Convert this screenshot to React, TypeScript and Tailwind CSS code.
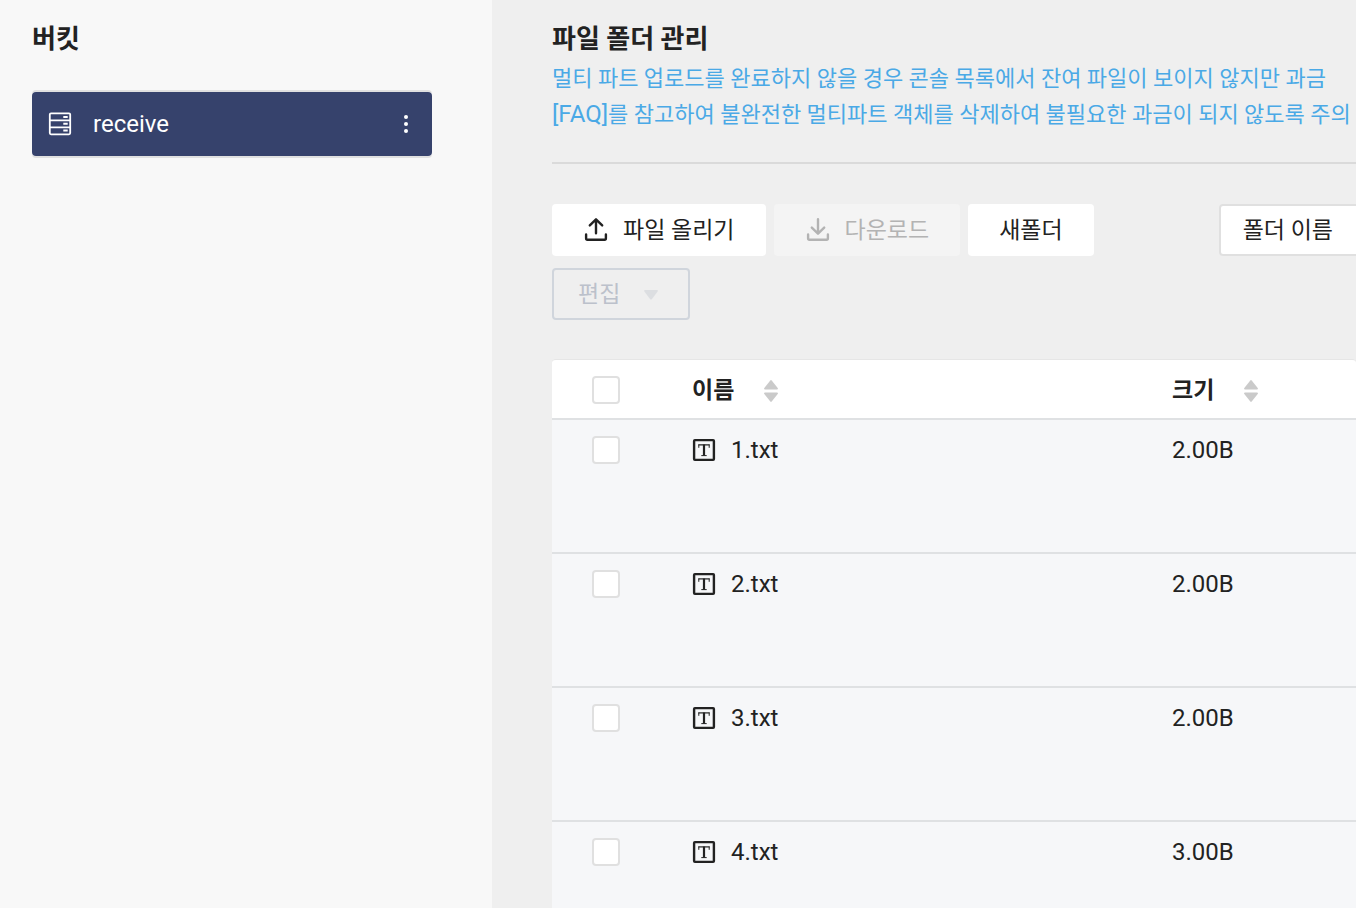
import React from "react";

const files = [
  { name: "1.txt", size: "2.00B" },
  { name: "2.txt", size: "2.00B" },
  { name: "3.txt", size: "2.00B" },
  { name: "4.txt", size: "3.00B" },
];

function BucketIcon() {
  return (
    <svg width="24" height="24" viewBox="0 0 24 24" fill="none" stroke="currentColor" strokeWidth="1.8" aria-hidden="true">
      <rect x="1.8" y="1.3" width="20.4" height="21" rx="1.2" />
      <path d="M1.8 8.3H22.2M1.8 15.3H22.2" />
      <path d="M15.3 5H19.7M15.3 11.8H19.7M15.3 18.6H19.7" strokeWidth="2" />
    </svg>
  );
}

function TransferIcon({ up }: { up?: boolean }) {
  return (
    <svg
      width="24"
      height="24"
      viewBox="0 1 24 24"
      fill="none"
      stroke="currentColor"
      strokeWidth="2.4"
      strokeLinecap="round"
      strokeLinejoin="round"
      overflow="visible"
      aria-hidden="true"
    >
      <path d="M2.1 16.4V20.3Q2.1 21.7 3.4 21.7H20.6Q21.9 21.7 21.9 20.3V16.4" />
      {up ? <path d="M12 15.2V1.4M5.8 7.4L12 1.3L18.2 7.4" /> : <path d="M12 1.2V15.4M5.8 9.6L12 15.7L18.2 9.6" />}
    </svg>
  );
}

function TextFileIcon() {
  return (
    <svg width="24" height="24" viewBox="0 0 24 24" fill="none" stroke="currentColor" aria-hidden="true">
      <rect x="2.1" y="2.1" width="19.8" height="19.8" rx="0.8" strokeWidth="2.4" />
      <path d="M6.4 6.9H17.6" strokeWidth="1.2" />
      <path d="M6.8 6.5V9.8M17.2 6.5V9.8" strokeWidth="1" />
      <path d="M12 6.5V17.5" strokeWidth="2.2" />
      <path d="M9.3 17.6H14.7" strokeWidth="1" />
    </svg>
  );
}

function SortIcon() {
  return (
    <svg width="14" height="22" viewBox="0 0 14 22" fill="#cacaca" aria-hidden="true">
      <path d="M6.3 0.4Q7 -0.3 7.7 0.4L13.7 7.9Q14.4 9.6 13 9.6H1Q-0.4 9.6 0.3 7.9Z" />
      <path d="M6.3 21.6Q7 22.3 7.7 21.6L13.7 14.1Q14.4 12.4 13 12.4H1Q-0.4 12.4 0.3 14.1Z" />
    </svg>
  );
}

function Checkbox({ label }: { label: string }) {
  return (
    <input
      type="checkbox"
      aria-label={label}
      className="block size-7 appearance-none rounded border-2 border-[#e0e0e0] bg-white checked:bg-[#36426c]"
    />
  );
}

export default function App() {
  return (
    <div className="flex h-screen overflow-hidden bg-[#efefef] font-['Roboto','Noto_Sans_CJK_KR',sans-serif] text-2xl text-[#222]" lang="ko">
      <aside className="w-[492px] shrink-0 bg-[#f8f8f8] pt-[21px] pr-15 pl-8">
        <h2 className="text-[26px] leading-9 font-bold">버킷</h2>
        <ul className="mt-[33px]">
          <li className="rounded border-y-2 border-[#e0e0e0]">
            <div className="flex h-16 items-center rounded bg-[#36426c] pr-3.5 pl-4 text-white">
              <a href="#receive" className="flex flex-1 items-center gap-[21px]">
                <BucketIcon />
                receive
              </a>
              <button type="button" aria-label="메뉴" className="flex size-6 items-center justify-center">
                <svg width="4" height="18" viewBox="0 0 4 18" fill="currentColor" aria-hidden="true">
                  <circle cx="2" cy="2" r="2" />
                  <circle cx="2" cy="9" r="2" />
                  <circle cx="2" cy="16" r="2" />
                </svg>
              </button>
            </div>
          </li>
        </ul>
      </aside>

      <main className="min-w-0 flex-1 overflow-hidden pt-[21px] pl-15">
        <h1 className="text-[26px] leading-9 font-bold">파일 폴더 관리</h1>
        <p className="mt-1 border-b-2 border-[#dadada] pb-[29px] text-[22px] leading-9 whitespace-nowrap text-[#4aa9e6]">
          멀티 파트 업로드를 완료하지 않을 경우 콘솔 목록에서 잔여 파일이 보이지 않지만 과금
          <br />
          <a href="#faq" className="text-2xl leading-none">[FAQ]</a>를 참고하여 불완전한 멀티파트 객체를 삭제하여
          불필요한 과금이 되지 않도록 주의
        </p>

        <div className="mt-10 flex items-center gap-2 text-[23px]">
          <button type="button" className="flex h-13 shrink-0 items-center gap-[15px] rounded bg-white pt-0.5 pr-[31px] pl-8">
            <TransferIcon up />
            파일 올리기
          </button>
          <button
            type="button"
            disabled
            className="flex h-13 shrink-0 items-center gap-[15px] rounded bg-[#f4f4f4] pt-0.5 pr-[31px] pl-8 text-[#b3b3b3]"
          >
            <TransferIcon />
            다운로드
          </button>
          <button type="button" className="h-13 shrink-0 rounded bg-white px-[31px] pt-0.5">
            새폴더
          </button>
          <select
            aria-label="검색 조건"
            className="ml-[117px] h-13 w-60 shrink-0 appearance-none rounded border-2 border-[#e0e0e0] bg-white px-[22px] pt-0.5"
          >
            <option>폴더 이름</option>
          </select>
        </div>
        <button
          type="button"
          disabled
          className="mt-3 flex h-13 w-[138px] items-center justify-between rounded border-2 border-[#d0d5dc] pt-0.5 pr-[30px] pl-6 text-[23px] text-[#bcc1cb]"
        >
          편집
          <svg width="14" height="10" viewBox="0 0 14 10" fill="#dcdee1" aria-hidden="true">
            <path d="M1 0H13Q14.4 0 13.6 1.4L7.8 9.2Q7 10 6.2 9.2L0.4 1.4Q-0.4 0 1 0Z" />
          </svg>
        </button>

        <div className="mt-[39px] overflow-hidden rounded-t border-t border-[#e6e6e6]">
          <table className="w-full table-fixed border-separate border-spacing-0 text-left">
            <colgroup>
              <col className="w-[140px]" />
              <col className="w-[480px]" />
              <col />
            </colgroup>
            <thead className="bg-white text-[23px]">
              <tr className="h-15 *:border-b-2 *:border-[#dfe1e3]">
                <th className="pt-0.5 pl-10">
                  <Checkbox label="전체 선택" />
                </th>
                <th className="pt-1">
                  <button type="button" className="flex items-center gap-[30px] font-bold">
                    이름
                    <SortIcon />
                  </button>
                </th>
                <th className="pt-1">
                  <button type="button" className="flex items-center gap-[30px] font-bold">
                    크기
                    <SortIcon />
                  </button>
                </th>
              </tr>
            </thead>
            <tbody className="bg-[#f6f7f9]">
              {files.map((file) => (
                <tr key={file.name} className="h-[134px] align-top *:border-b-2 *:border-[#dfe1e3]">
                  <td className="pt-4 pl-10">
                    <Checkbox label={file.name} />
                  </td>
                  <td className="pt-3.5">
                    <span className="flex items-center gap-[15px]">
                      <TextFileIcon />
                      {file.name}
                    </span>
                  </td>
                  <td className="pt-3.5">{file.size}</td>
                </tr>
              ))}
            </tbody>
          </table>
        </div>
      </main>
    </div>
  );
}
